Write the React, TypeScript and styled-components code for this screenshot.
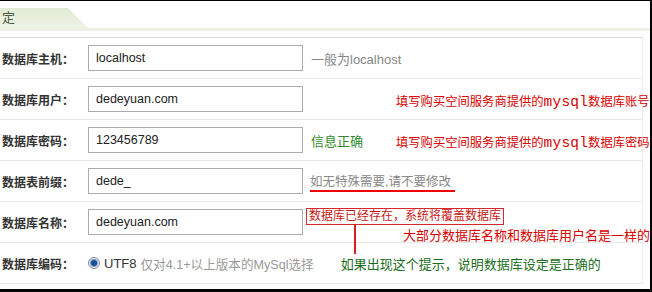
import React from 'react';
import styled, { createGlobalStyle } from 'styled-components';

const GlobalStyle = createGlobalStyle`
  html,
  body {
    margin: 0;
    padding: 0;
    background: #fff;
  }
  body {
    font-family: 'Liberation Sans', 'Noto Sans CJK SC', sans-serif;
  }
`;

const font = `'Liberation Sans', 'Noto Sans CJK SC', sans-serif`;

const Frame = styled.div`
  position: relative;
  width: 652px;
  height: 292px;
  box-sizing: border-box;
  border-top: 1px solid #000;
  border-right: 2px solid #000;
  border-bottom: 3px solid #000;
  overflow: hidden;
  display: flex;
  flex-direction: column;
  background: #fff;
`;

const Header = styled.div`
  height: 27px;
  display: flex;
  align-items: flex-end;
`;

const Tab = styled.div`
  width: 88px;
  height: 20px;
  box-sizing: border-box;
  padding-left: 2px;
  background: linear-gradient(#e2ebd4, #eef3e7);
  clip-path: polygon(0 0, 68px 0, 88px 100%, 0 100%);
  font: 13px/20px ${font};
  color: #4b5a40;
`;

const HeaderRule = styled.div`
  height: 3px;
  background: #edf0e5;
  margin-bottom: 6px;
`;

const Panel = styled.div`
  width: 642px;
  border-top: 1px solid #d9d9d9;
  border-right: 1px solid #ededed;
`;

const Row = styled.div`
  display: flex;
  align-items: center;
  height: 40px;
  padding-left: 2px;
  border-bottom: 1px solid #e8e8e8;
`;

const Label = styled.div`
  flex: none;
  width: 86px;
  font: bold 12px ${font};
  color: #333;
`;

const TextInput = styled.input`
  flex: none;
  width: 215px;
  height: 26px;
  box-sizing: border-box;
  margin: 0;
  padding: 0 7px;
  border: 1px solid #a8acb2;
  font: 12.5px ${font};
  color: #222;
  outline: 0;
`;

const Hint = styled.span<{ $color?: string }>`
  flex: none;
  min-width: 85px;
  margin-left: 8px;
  font: 13px ${font};
  color: ${(p) => p.$color || '#888'};
  white-space: nowrap;
`;

const UnderlinedHint = styled.span`
  flex: none;
  margin: 5px 0 0 7px;
  padding: 0 4px 1px 0;
  border-bottom: 2px solid #e00;
  font: 12.5px/14px ${font};
  color: #888;
  white-space: nowrap;
`;

const Annotation = styled.span`
  font: 12.3px ${font};
  color: #d80000;
  white-space: nowrap;
  padding-top: 3px;
`;

const Mono = styled.span`
  font-family: 'Liberation Mono', monospace;
  font-size: 14.5px;
  letter-spacing: 0.2px;
`;

const Callout = styled.div`
  flex: none;
  align-self: flex-start;
  margin: 6px 0 0 3px;
  display: flex;
  flex-direction: column;
  align-items: flex-start;
`;

const RedBox = styled.span`
  position: relative;
  padding: 0 2px;
  border: 1px solid #d6282c;
  font: 12px/15px ${font};
  color: #c81818;
  white-space: nowrap;

  &::after {
    content: '';
    position: absolute;
    left: 47px;
    top: 100%;
    width: 2px;
    height: 30px;
    background: #d42020;
  }
`;

const SubNote = styled.span`
  margin: 4px 0 0 97px;
  font: 13px/14px ${font};
  color: #d80000;
  white-space: nowrap;
`;

const Radio = styled.span`
  flex: none;
  width: 12px;
  height: 12px;
  box-sizing: border-box;
  border-radius: 50%;
  border: 1px solid #858a92;
  background: radial-gradient(circle, #1d4f92 0 2.5px, #6f9bd0 3.5px, #e6ebf2 4.5px);
`;

const RadioText = styled.span`
  margin-left: 4px;
  font: 13px ${font};
  color: #333;
`;

const Muted = styled.span`
  margin-left: 4px;
  font: 12.6px ${font};
  color: #999;
  white-space: nowrap;
`;

const GreenNote = styled.span`
  margin-left: 27px;
  font: 13px ${font};
  color: #1c6e1c;
  white-space: nowrap;
`;

export default function App() {
  return (
    <>
      <GlobalStyle />
      <Frame>
        <Header>
          <Tab>定</Tab>
        </Header>
        <HeaderRule />
        <Panel>
          <Row>
            <Label>数据库主机：</Label>
            <TextInput readOnly defaultValue="localhost" />
            <Hint>一般为localhost</Hint>
          </Row>
          <Row>
            <Label>数据库用户：</Label>
            <TextInput readOnly defaultValue="dedeyuan.com" />
            <Hint />
            <Annotation>
              填写购买空间服务商提供的<Mono>mysql</Mono>数据库账号
            </Annotation>
          </Row>
          <Row>
            <Label>数据库密码：</Label>
            <TextInput readOnly defaultValue="123456789" />
            <Hint $color="#2f8a2a">信息正确</Hint>
            <Annotation>
              填写购买空间服务商提供的<Mono>mysql</Mono>数据库密码
            </Annotation>
          </Row>
          <Row>
            <Label>数据表前缀：</Label>
            <TextInput readOnly defaultValue="dede_" />
            <UnderlinedHint>如无特殊需要,请不要修改</UnderlinedHint>
          </Row>
          <Row>
            <Label>数据库名称：</Label>
            <TextInput readOnly defaultValue="dedeyuan.com" />
            <Callout>
              <RedBox>数据库已经存在，系统将覆盖数据库</RedBox>
              <SubNote>大部分数据库名称和数据库用户名是一样的</SubNote>
            </Callout>
          </Row>
          <Row>
            <Label>数据库编码：</Label>
            <Radio />
            <RadioText>UTF8</RadioText>
            <Muted>仅对4.1+以上版本的MySql选择</Muted>
            <GreenNote>如果出现这个提示，说明数据库设定是正确的</GreenNote>
          </Row>
        </Panel>
      </Frame>
    </>
  );
}
